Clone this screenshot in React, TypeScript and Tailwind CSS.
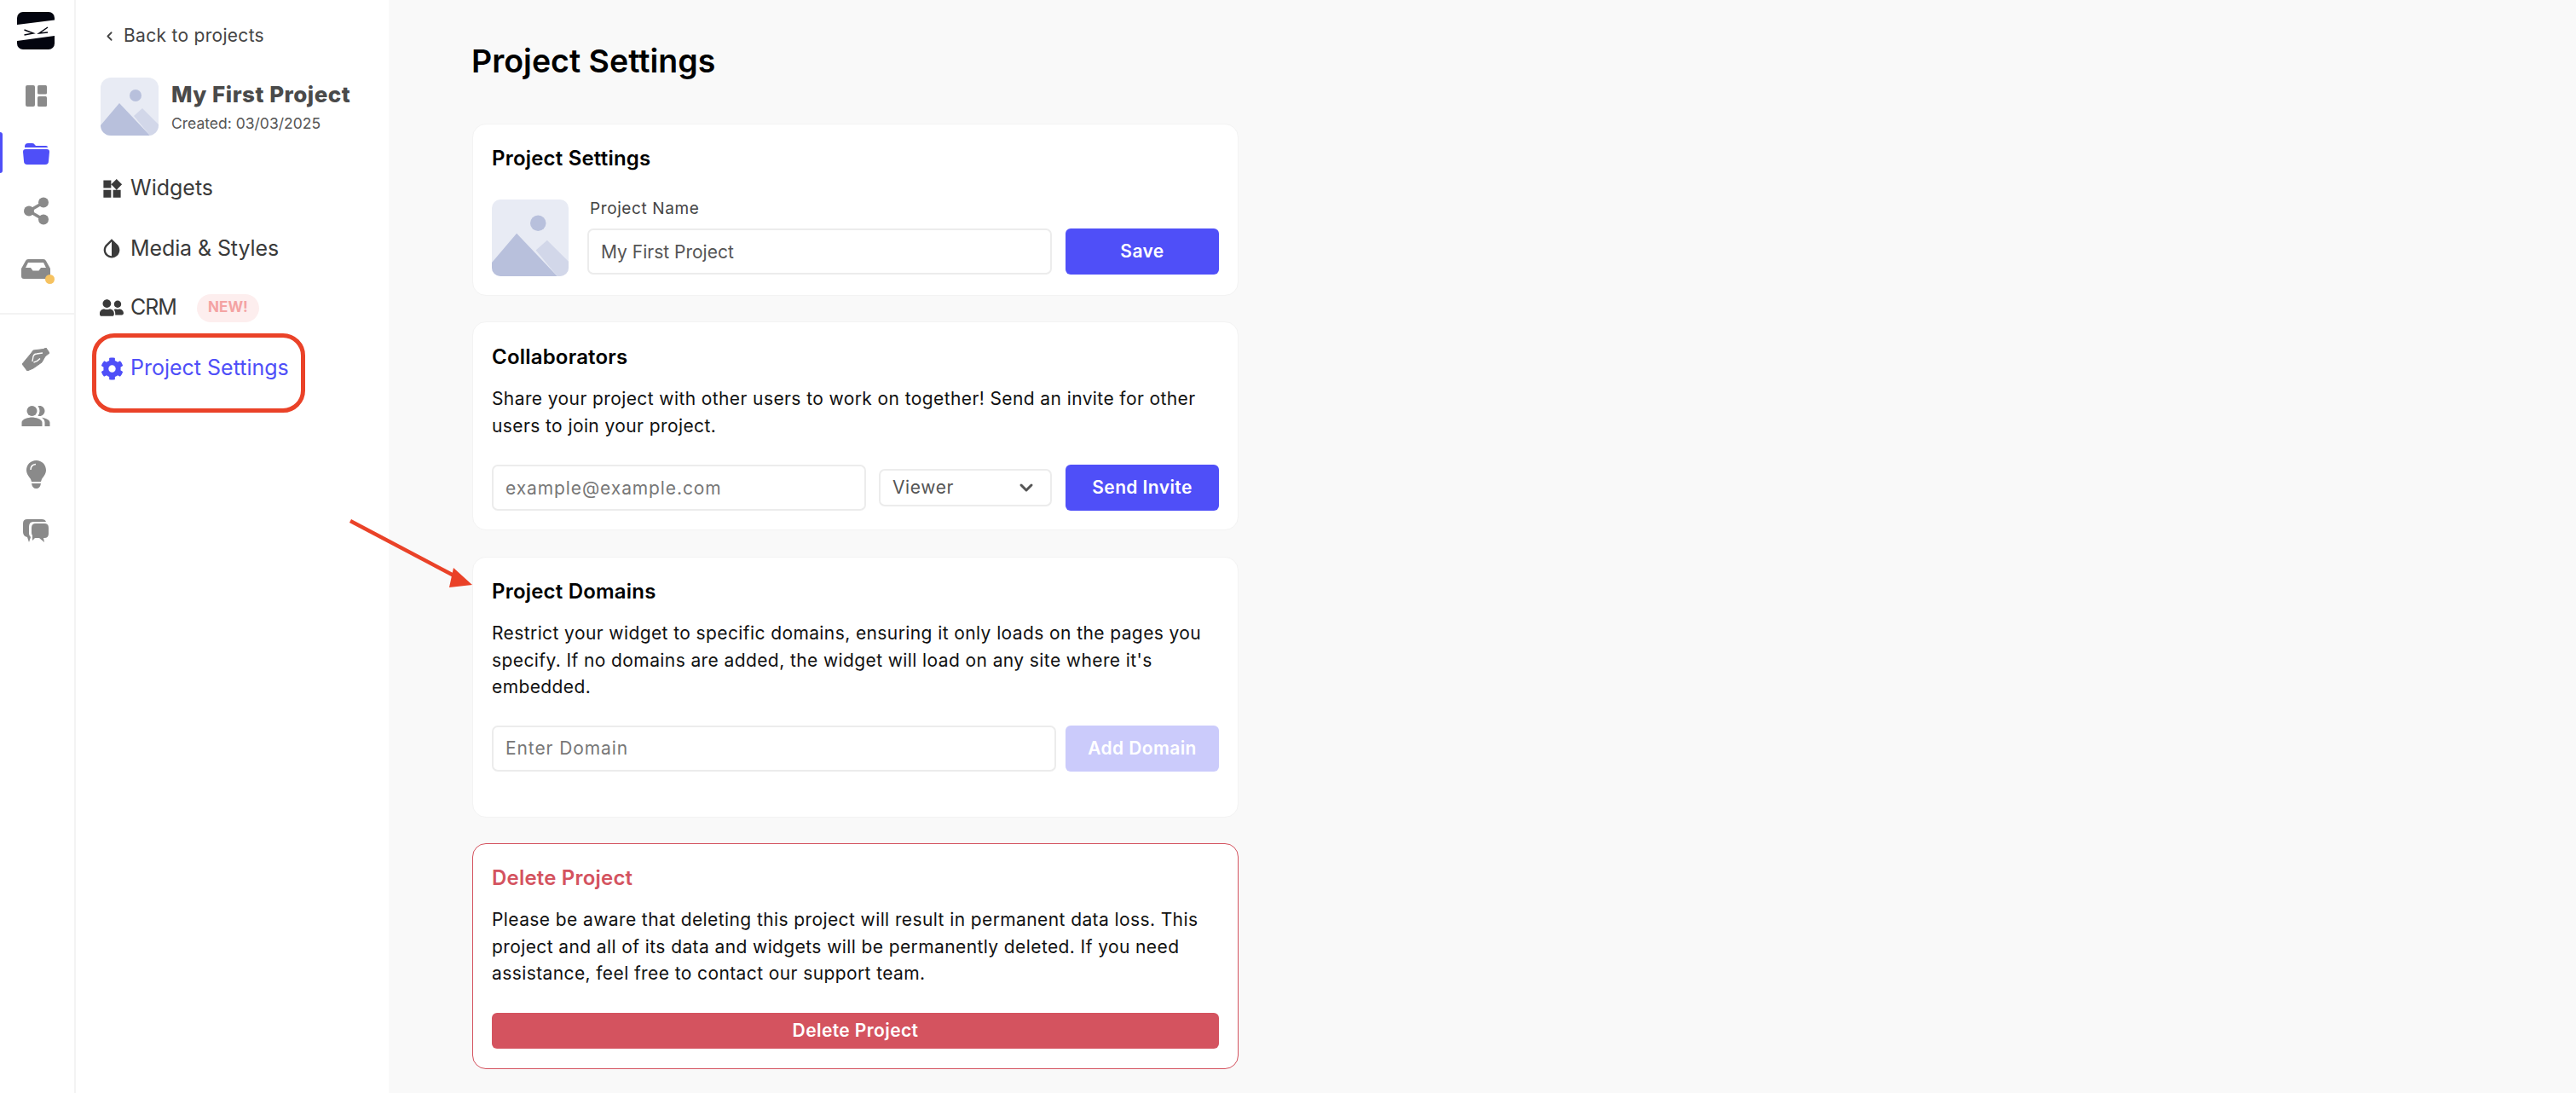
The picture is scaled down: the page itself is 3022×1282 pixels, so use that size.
import React from "react";
import { MdPeopleAlt, MdWidgets, MdInvertColors } from "react-icons/md";
import { FaCog, FaUserFriends } from "react-icons/fa";
import { LuChevronLeft, LuChevronDown } from "react-icons/lu";

function Thumb({ className }: { className: string }) {
  return (
    <svg viewBox="0 0 68 68" className={className}>
      <rect width="68" height="68" fill="#e8ebf4" />
      <circle cx="41" cy="21" r="7" fill="#b8c0dc" />
      <path d="M0 56 L22 30 L58 68 H0Z" fill="#b8c0dc" />
      <path d="M39 45 L49 36 L68 55 V68 H58Z" fill="#d2d7e9" />
    </svg>
  );
}

function Logo() {
  return (
    <svg viewBox="0 0 44 44" className="w-[44px] h-[44px]">
      <rect width="44" height="44" rx="7" fill="#03050f" />
      <path d="M0 15 L44 9.5 V28 L0 34Z" fill="#fff" />
      <path d="M8.5 21 L19 25 L8.5 27M36 18 L26 25 L36 24" fill="none" stroke="#03050f" strokeWidth="1.5" />
    </svg>
  );
}

const grey = "#8a8a8a";

function Slot({ children, h, mb, className }: { children: React.ReactNode; h: string; mb: string; className?: string }) {
  return <div className={`w-[44px] -ml-[3px] flex items-center justify-center relative ${h} ${mb} ${className ?? ""}`}>{children}</div>;
}

function Rail() {
  return (
    <aside className="w-[89px] shrink-0 h-[1282px] border-r-2 border-[#f3f3f3] bg-white flex flex-col items-center relative">
      <div className="mt-[14px] mb-[34px] -ml-[3px]"><Logo /></div>
      <Slot h="h-[40px]" mb="mb-[28px]">
        <svg viewBox="0 0 25 25" className="w-[25px] h-[25px]" fill={grey}>
          <rect width="11" height="25" rx="2" />
          <rect x="14" width="11" height="10.5" rx="1.5" />
          <rect x="14" y="13" width="11" height="12" rx="1.5" />
        </svg>
      </Slot>
      <div className="absolute left-0 top-[155px] w-[3px] h-[48px] bg-[#4f4ff8] rounded-r" />
      <Slot h="h-[40px]" mb="mb-[27px]">
        <svg viewBox="0 0 31 25" className="w-[31px] h-[25px]" fill="#4f4ff8">
          <path d="M2 5 V4 Q2 0 6 0 H11 Q13 0 14 2 L15 3 H27 Q29 3 29 5Z" />
          <path d="M3 7 H28 Q31 7 31 10 L30 21 Q30 25 26 25 H5 Q1 25 1 21 L0 10 Q0 7 3 7Z" />
        </svg>
      </Slot>
      <Slot h="h-[40px]" mb="mb-[28px]">
        <svg viewBox="0 0 29 33" className="w-[29px] h-[33px]" fill={grey} stroke={grey}>
          <path d="M23 6.5 L6 16.5 L23 26.5" strokeWidth="3.5" fill="none" />
          <circle cx="23" cy="6.5" r="6" strokeWidth="0" />
          <circle cx="6" cy="16.5" r="6" strokeWidth="0" />
          <circle cx="23" cy="26.5" r="6" strokeWidth="0" />
        </svg>
      </Slot>
      <Slot h="h-[40px]" mb="mb-[32px]">
        <svg viewBox="0 0 34 23" className="w-[34px] h-[23px]" fill={grey}>
          <path fillRule="evenodd" d="M8 0 H26 Q28 0 29 2 L34 11 V20 Q34 23 31 23 H3 Q0 23 0 20 V11 L5 2 Q6 0 8 0Z M8 4 L5 10 H11 L13.5 13.5 H20.5 L23 10 H29 L26 4Z" />
        </svg>
        <span className="absolute right-[0px] bottom-[2px] w-[11px] h-[11px] rounded-full bg-[#f6c260]" />
      </Slot>
      <div className="w-full h-[2px] bg-[#f3f3f3] mb-[34px]" />
      <Slot h="h-[36px]" mb="mb-[31px]">
        <svg viewBox="0 0 32 27" className="w-[32px] h-[27px]" fill={grey}>
          <path d="M0 19 L10 7 L13 3 L25 1.5 L28 0 L32 6 L27 10 L23 17 L13 24 L6 27Z" strokeLinejoin="round" stroke={grey} strokeWidth="1" />
          <path d="M12 16 L13 10 Q14 7 17 7 L24 6 M13.5 17 Q18 16 21 12.5" fill="none" stroke="#fff" strokeWidth="1.3" />
        </svg>
      </Slot>
      <Slot h="h-[36px]" mb="mb-[32px]"><MdPeopleAlt className="text-[36px]" color={grey} /></Slot>
      <Slot h="h-[36px]" mb="mb-[31px]">
        <svg viewBox="0 0 23 33" className="w-[23px] h-[33px]" fill={grey}>
          <path d="M11.5 0 C18 0 23 5 23 11.5 C23 16 20 19 18 22 L17 25 H6 L5 22 C3 19 0 16 0 11.5 C0 5 5 0 11.5 0Z" />
          <path d="M6 27 H17 Q16 33 11.5 33 Q7 33 6 27Z" />
          <path d="M5 11 Q5 5 11 4.5" fill="none" stroke="#fff" strokeWidth="1.5" />
        </svg>
      </Slot>
      <Slot h="h-[36px]" mb="mb-0">
        <svg viewBox="0 0 30 28" className="w-[30px] h-[28px]" fill={grey}>
          <path d="M5 0 H22 Q26 0 27 3 H12 Q7 3 7 9 V17 Q7 19 9 21 L7 27 L5 21 Q0 20 0 15 V5 Q0 0 5 0Z" />
          <path d="M15 5 H25 Q30 5 30 10 V17 Q30 22 25 22 H24 L25 27 L19 22 H14 L11 25 V19 Q10 18 10 16 V10 Q10 5 15 5Z" />
        </svg>
      </Slot>
    </aside>
  );
}

function NavItem({ icon, label, active, children, tracking }: { icon: React.ReactNode; label: string; active?: boolean; children?: React.ReactNode; tracking?: string }) {
  return (
    <div className={`flex items-center h-[36px] pl-[28px] ${active ? "text-[#4f4ff8]" : "text-[#3a3a3a]"}`}>
      <span className="w-[28px] flex justify-center">{icon}</span>
      <span className={`ml-[8px] text-[25px] ${tracking ?? ""}`}>{label}</span>
      {children}
    </div>
  );
}

function SubSidebar() {
  return (
    <aside className="w-[367px] shrink-0 h-[1282px] bg-white relative">
      <div className="flex items-center pl-[32px] pt-[27px] h-[57px] text-[#444] text-[21px] tracking-[0.3px]">
        <LuChevronLeft className="text-[17px] -ml-[1px] mr-[8px]" strokeWidth={2.5} />
        <span>Back to projects</span>
      </div>
      <div className="flex items-center pl-[29px] mt-[34px]">
        <Thumb className="w-[68px] h-[68px] rounded-[12px]" />
        <div className="ml-[15px]">
          <div className="text-[26px] leading-[36px] font-extrabold text-[#4a4a4a] tracking-[0.5px]">My First Project</div>
          <div className="text-[17.5px] leading-[26px] text-[#555] mt-[3px]">Created: 03/03/2025</div>
        </div>
      </div>
      <div className="flex flex-col mt-[44px] gap-[35px]">
        <NavItem icon={<MdWidgets className="text-[27px]" />} label="Widgets" />
        <NavItem icon={<MdInvertColors className="text-[28px]" />} label="Media & Styles" tracking="-tracking-[0.1px]" />
        <div className="-mt-[2px]">
          <NavItem icon={<FaUserFriends className="text-[28px]" />} label="CRM" tracking="-tracking-[1px]">
            <span className="ml-[24px] w-[73px] h-[33px] rounded-full bg-[#fdeeee] text-[#f4a3a3] font-bold text-[17px] flex items-center justify-center">NEW!</span>
          </NavItem>
        </div>
        <NavItem icon={<FaCog className="text-[27px]" />} label="Project Settings" active />
      </div>
      <div className="absolute left-[19px] top-[391px] w-[250px] h-[93px] border-[5px] border-[#ea4228] rounded-[26px]" />
    </aside>
  );
}

function Card({ danger, children, className }: { danger?: boolean; children: React.ReactNode; className: string }) {
  return (
    <section className={`w-[899px] rounded-[16px] bg-white border px-[22px] ${danger ? "border-[#d4535f]" : "border-[#f3f3f3]"} ${className}`}>
      {children}
    </section>
  );
}

function Heading({ children, danger }: { children: React.ReactNode; danger?: boolean }) {
  return <h2 className={`text-[24px] leading-[32px] font-semibold tracking-[0.2px] ${danger ? "text-[#d4535f]" : "text-black"}`}>{children}</h2>;
}

function Para({ children }: { children: React.ReactNode }) {
  return <p className="text-[21px] leading-[31.5px] tracking-[0.4px] text-[#111] mt-[17px] w-[856px]">{children}</p>;
}

function Button({ children, className }: { children: React.ReactNode; className: string }) {
  return <button className={`rounded-[6px] text-white text-[21px] font-semibold tracking-[0.4px] flex items-center justify-center ${className}`}>{children}</button>;
}

function Field({ className, placeholder, value }: { className: string; placeholder?: string; value?: string }) {
  return (
    <input
      readOnly
      placeholder={placeholder}
      defaultValue={value}
      className={`h-[54px] rounded-[7px] border-2 border-[#ececec] bg-white px-[14px] text-[21px] text-[#555] placeholder:text-[#777] placeholder:tracking-[0.9px] outline-none ${className}`}
    />
  );
}

export default function App() {
  return (
    <div className="w-[3022px] h-[1282px] overflow-hidden flex bg-[#f9f9f9] relative" style={{ fontFamily: "Inter, 'Liberation Sans', sans-serif" }}>
      <Rail />
      <SubSidebar />
      <main className="pl-[98px] flex-1">
        <h1 className="text-[37.5px] leading-[50px] font-semibold text-black mt-[47px] mb-[48px] -ml-[1px]">Project Settings</h1>
        <Card className="h-[202px] pt-[24px]">
          <Heading>Project Settings</Heading>
          <div className="flex mt-[32px]">
            <Thumb className="w-[90px] h-[90px] rounded-[10px]" />
            <div className="ml-[22px] flex-1">
              <div className="text-[19px] leading-[22px] tracking-[0.6px] text-[#444] pl-[3px]">Project Name</div>
              <div className="flex mt-[12px] gap-[16px]">
                <Field className="w-[545px]" value="My First Project" />
                <Button className="w-[180px] h-[54px] bg-[#4f4ff8]">Save</Button>
              </div>
            </div>
          </div>
        </Card>
        <Card className="h-[245px] mt-[30px] pt-[25px]">
          <Heading>Collaborators</Heading>
          <Para>Share your project with other users to work on together! Send an invite for other users to join your project.</Para>
          <div className="flex items-center mt-[30px]">
            <Field className="w-[439px]" placeholder="example@example.com" />
            <div className="ml-[15px] w-[203px] h-[44px] rounded-[7px] border-2 border-[#ececec] flex items-center justify-between pl-[14px] pr-[16px] text-[21px] tracking-[0.6px] text-[#555]">
              <span>Viewer</span>
              <LuChevronDown className="text-[24px]" strokeWidth={3} />
            </div>
            <Button className="ml-[16px] w-[180px] h-[54px] bg-[#4f4ff8]">Send Invite</Button>
          </div>
        </Card>
        <Card className="h-[306px] mt-[31px] pt-[24px]">
          <Heading>Project Domains</Heading>
          <Para>Restrict your widget to specific domains, ensuring it only loads on the pages you specify. If no domains are added, the widget will load on any site where it's embedded.</Para>
          <div className="flex items-center mt-[29px] gap-[11px]">
            <Field className="w-[662px]" placeholder="Enter Domain" />
            <Button className="w-[180px] h-[54px] bg-[#cbcbfb]">Add Domain</Button>
          </div>
        </Card>
        <Card danger className="h-[265px] mt-[30px] pt-[24px]">
          <Heading danger>Delete Project</Heading>
          <Para>Please be aware that deleting this project will result in permanent data loss. This project and all of its data and widgets will be permanently deleted. If you need assistance, feel free to contact our support team.</Para>
          <Button className="w-[853px] h-[42px] bg-[#d4535f] mt-[30px] font-medium">Delete Project</Button>
        </Card>
      </main>
      <svg className="absolute left-[405px] top-[605px] w-[155px] h-[90px]" viewBox="405 605 155 90">
        <path d="M411 611 L538 678" stroke="#ea4228" strokeWidth="4.5" fill="none" />
        <path d="M554 686 L532 666 L527 689Z" fill="#ea4228" />
      </svg>
    </div>
  );
}
